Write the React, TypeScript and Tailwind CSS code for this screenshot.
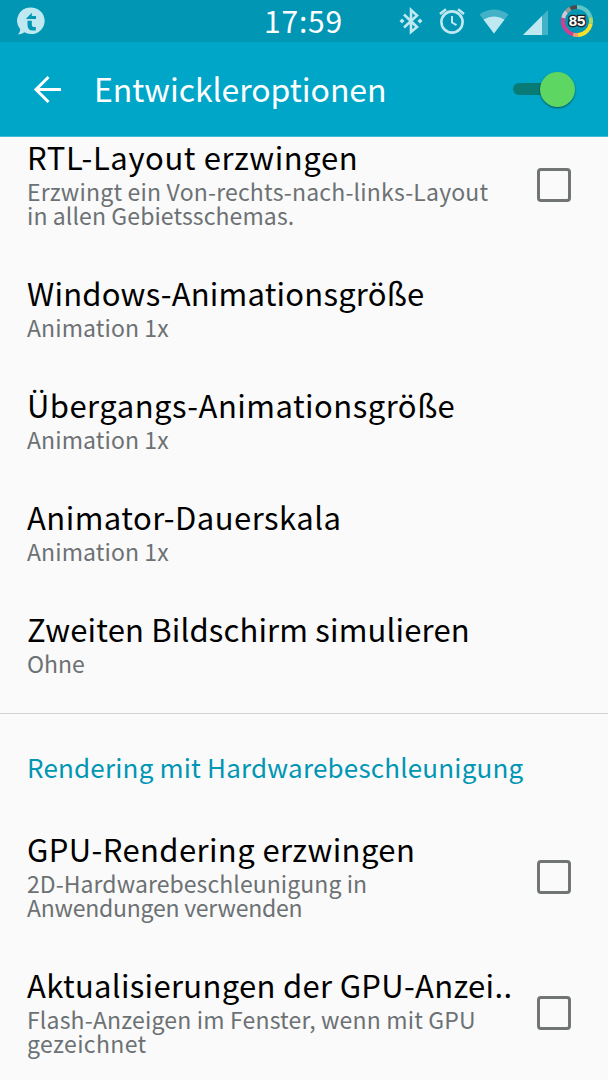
import clsx from "clsx";
import { useState } from "react";

interface Preference {
  title: string;
  titleClass?: string;
  summary: { text: string; className?: string }[];
  checkbox?: boolean;
}

const drawingPrefs: Preference[] = [
  {
    title: "RTL-Layout erzwingen",
    titleClass: "tracking-[0.6px]",
    summary: [
      { text: "Erzwingt ein Von-rechts-nach-links-Layout", className: "tracking-[0.19px]" },
      { text: "in allen Gebietsschemas.", className: "tracking-[0.1px]" },
    ],
    checkbox: true,
  },
  {
    title: "Windows-Animationsgröße",
    titleClass: "tracking-[0.21px]",
    summary: [{ text: "Animation 1x", className: "tracking-[0.1px]" }],
  },
  {
    title: "Übergangs-Animationsgröße",
    titleClass: "tracking-[0.48px]",
    summary: [{ text: "Animation 1x", className: "tracking-[0.1px]" }],
  },
  {
    title: "Animator-Dauerskala",
    titleClass: "tracking-[0.46px]",
    summary: [{ text: "Animation 1x", className: "tracking-[0.1px]" }],
  },
  {
    title: "Zweiten Bildschirm simulieren",
    titleClass: "tracking-[0.17px]",
    summary: [{ text: "Ohne" }],
  },
];

const renderingPrefs: Preference[] = [
  {
    title: "GPU-Rendering erzwingen",
    titleClass: "tracking-[0.4px]",
    summary: [
      { text: "2D-Hardwarebeschleunigung in", className: "tracking-[0.07px]" },
      { text: "Anwendungen verwenden", className: "tracking-[-0.23px]" },
    ],
    checkbox: true,
  },
  {
    title: "Aktualisierungen der GPU-Anzei..",
    titleClass: "tracking-[0.32px]",
    summary: [
      { text: "Flash-Anzeigen im Fenster, wenn mit GPU", className: "tracking-[0.17px]" },
      { text: "gezeichnet", className: "tracking-[0.35px]" },
    ],
    checkbox: true,
  },
];

function StatusBar() {
  return (
    <div className="flex h-[42px] items-center bg-[#0096b4] text-[#bfe8f1]">
      <svg className="ml-4 h-[30px] w-[30px]" viewBox="0 0 30 30">
        <path
          d="M15.500 1.500a13.300 13.300 0 1 1-7 24.700Q6 28 2 28.500Q4.300 26 4.200 23.200A13.300 13.300 0 0 1 15.500 1.500z"
          fill="currentColor"
        />
        <path
          d="M9.800 13L15.800 6.800V10H20V13H9.800ZM11.500 14.800H15.800V19Q15.800 21 17.800 21H19.800V24.500H17Q11.500 24.500 11.500 19Z"
          fill="#0096b4"
        />
      </svg>
      <span className="ml-[218px] w-[130px] whitespace-nowrap pb-[2px] text-[30px] text-white leading-[40px] tracking-[0.8px]">
        17:59
      </span>
      {/* Bluetooth */}
      <svg className="ml-[5px] h-7 w-6 shrink-0" viewBox="0 0 24 28">
        <path d="M5 7.500L18 20L12 25V3L18 8.500L5 20.500" fill="none" stroke="currentColor" strokeWidth="2.600" />
        <path d="M3 11.500L5.500 14L3 16.500L.5 14ZM21 11.500L23.500 14L21 16.500L18.500 14Z" fill="currentColor" />
      </svg>
      {/* Wecker */}
      <svg className="ml-[15px] h-7 w-7 shrink-0" viewBox="0 0 28 28">
        <circle cx="14" cy="15" r="10.600" fill="none" stroke="currentColor" strokeWidth="2.600" />
        <path d="M14 9V15.500L18.500 18.200" fill="none" stroke="currentColor" strokeWidth="2" />
        <path d="M2 7L8 2.200M26 7L20 2.200" stroke="currentColor" strokeWidth="2.600" />
      </svg>
      {/* WLAN */}
      <svg className="ml-[13px] h-7 w-[30px] shrink-0" viewBox="0 0 30 28">
        <path d="M.5 7.500Q15-2.500 29.500 7.500L15 26.500Z" fill="currentColor" opacity=".35" />
        <path d="M4.500 12.500Q15 6.500 25.500 12.500L15 26.500Z" fill="currentColor" />
      </svg>
      {/* Mobilfunk */}
      <svg className="ml-[14px] h-7 w-[26px] shrink-0" viewBox="0 0 26 28">
        <path d="M0 28L25 3V28Z" fill="currentColor" opacity=".35" />
        <path d="M0 28L19 9V28Z" fill="currentColor" />
      </svg>
      <BatteryRing />
    </div>
  );
}

function BatteryRing() {
  return (
    <svg className="ml-[12px] h-8 w-8 shrink-0" viewBox="0 0 32 32">
      <g fill="none" strokeWidth="4">
        <path d="M16 2A14 14 0 0 1 29.500 12.500" stroke="#5cc6c8" />
        <path d="M29.500 12.500A14 14 0 0 1 29.800 18.500" stroke="#a9d86a" />
        <path d="M29.800 18.500A14 14 0 0 1 17 30" stroke="#f5e02c" />
        <path d="M17 30A14 14 0 0 1 12 29.400" stroke="#f0a070" />
        <path d="M12 29.400A14 14 0 0 1 2.300 13" stroke="#cf3f93" />
        <path d="M2.300 13A14 14 0 0 1 5.500 6.700" stroke="#d7c5cd" />
        <path d="M5.500 6.700A14 14 0 0 1 9.500 3.600" stroke="#9a9a9a" />
        <path d="M9.500 3.600A14 14 0 0 1 16 2" stroke="#4a4a4a" />
      </g>
      <text
        className="font-['Liberation_Sans'] font-bold text-[15px]"
        fill="#fff"
        paintOrder="stroke"
        stroke="#222"
        strokeWidth="2.500"
        textAnchor="middle"
        x="16"
        y="21"
      >
        85
      </text>
    </svg>
  );
}

function ActionBar() {
  const [enabled, setEnabled] = useState(true);

  return (
    <header className="flex h-[95px] items-center border-[#40bcd5] border-b bg-[#00a6c8] pr-[33px] pl-[33px]">
      <svg className="h-7 w-7" fill="none" stroke="#fff" strokeWidth="3" viewBox="0 0 28 28">
        <path d="M28 14.500H3M15.500 2L3 14.500L15.500 27" />
      </svg>
      <h1 className="ml-[33px] flex-1 whitespace-nowrap pb-[3px] text-[32px] text-white leading-[46px] tracking-[-0.05px]">
        Entwickleroptionen
      </h1>
      <button
        aria-checked={enabled}
        className="relative h-9 w-[62px]"
        onClick={() => setEnabled(!enabled)}
        role="switch"
        type="button"
      >
        <span className="absolute top-[12px] left-0 h-3 w-[50px] rounded-full bg-[#087b76]" />
        <span
          className={clsx(
            "absolute top-px h-[35px] w-[35px] rounded-full shadow-[0_1px_2px_rgba(0,0,0,0.5)]",
            enabled ? "right-0 bg-[#5dd662]" : "left-0 bg-[#ececec]"
          )}
        />
      </button>
    </header>
  );
}

function PreferenceRow({ pref }: { pref: Preference }) {
  const [checked, setChecked] = useState(false);

  return (
    <div
      className={clsx("flex items-center", pref.summary.length > 1 ? "h-[136px]" : "h-[112px]")}
      onClick={() => setChecked(!checked)}
    >
      <div className="flex-1 self-start whitespace-nowrap pt-[8px] pl-[27px]">
        <div className={clsx("mb-[2px] text-[31px] text-black leading-[40px]", pref.titleClass)}>{pref.title}</div>
        {pref.summary.map((line) => (
          <div className={clsx("text-[#6c7174] text-[23px] leading-6", line.className)} key={line.text}>
            {line.text}
          </div>
        ))}
      </div>
      {pref.checkbox && (
        <div
          className={clsx(
            "relative -top-3 mr-[37px] h-[34px] w-[34px] shrink-0 rounded-[4px] border-3 border-[#707472]",
            checked && "bg-[#707472]"
          )}
        />
      )}
    </div>
  );
}

export default function App() {
  return (
    <div className="flex h-[1080px] w-[608px] flex-col overflow-hidden bg-[#fafafa] font-['Noto_Sans_CJK_SC',sans-serif]">
      <div className="z-10 shrink-0">
        <StatusBar />
        <ActionBar />
      </div>
      <main className="-mt-2 shrink-0">
        {drawingPrefs.map((pref) => (
          <PreferenceRow key={pref.title} pref={pref} />
        ))}
        <div className="h-px bg-[#d2d2d2]" />
        <h2 className="flex h-[107px] items-center whitespace-nowrap pb-[3px] pl-[27px] text-[#0096b4] text-[26px] tracking-[0.19px]">
          Rendering mit Hardwarebeschleunigung
        </h2>
        {renderingPrefs.map((pref) => (
          <PreferenceRow key={pref.title} pref={pref} />
        ))}
      </main>
    </div>
  );
}
